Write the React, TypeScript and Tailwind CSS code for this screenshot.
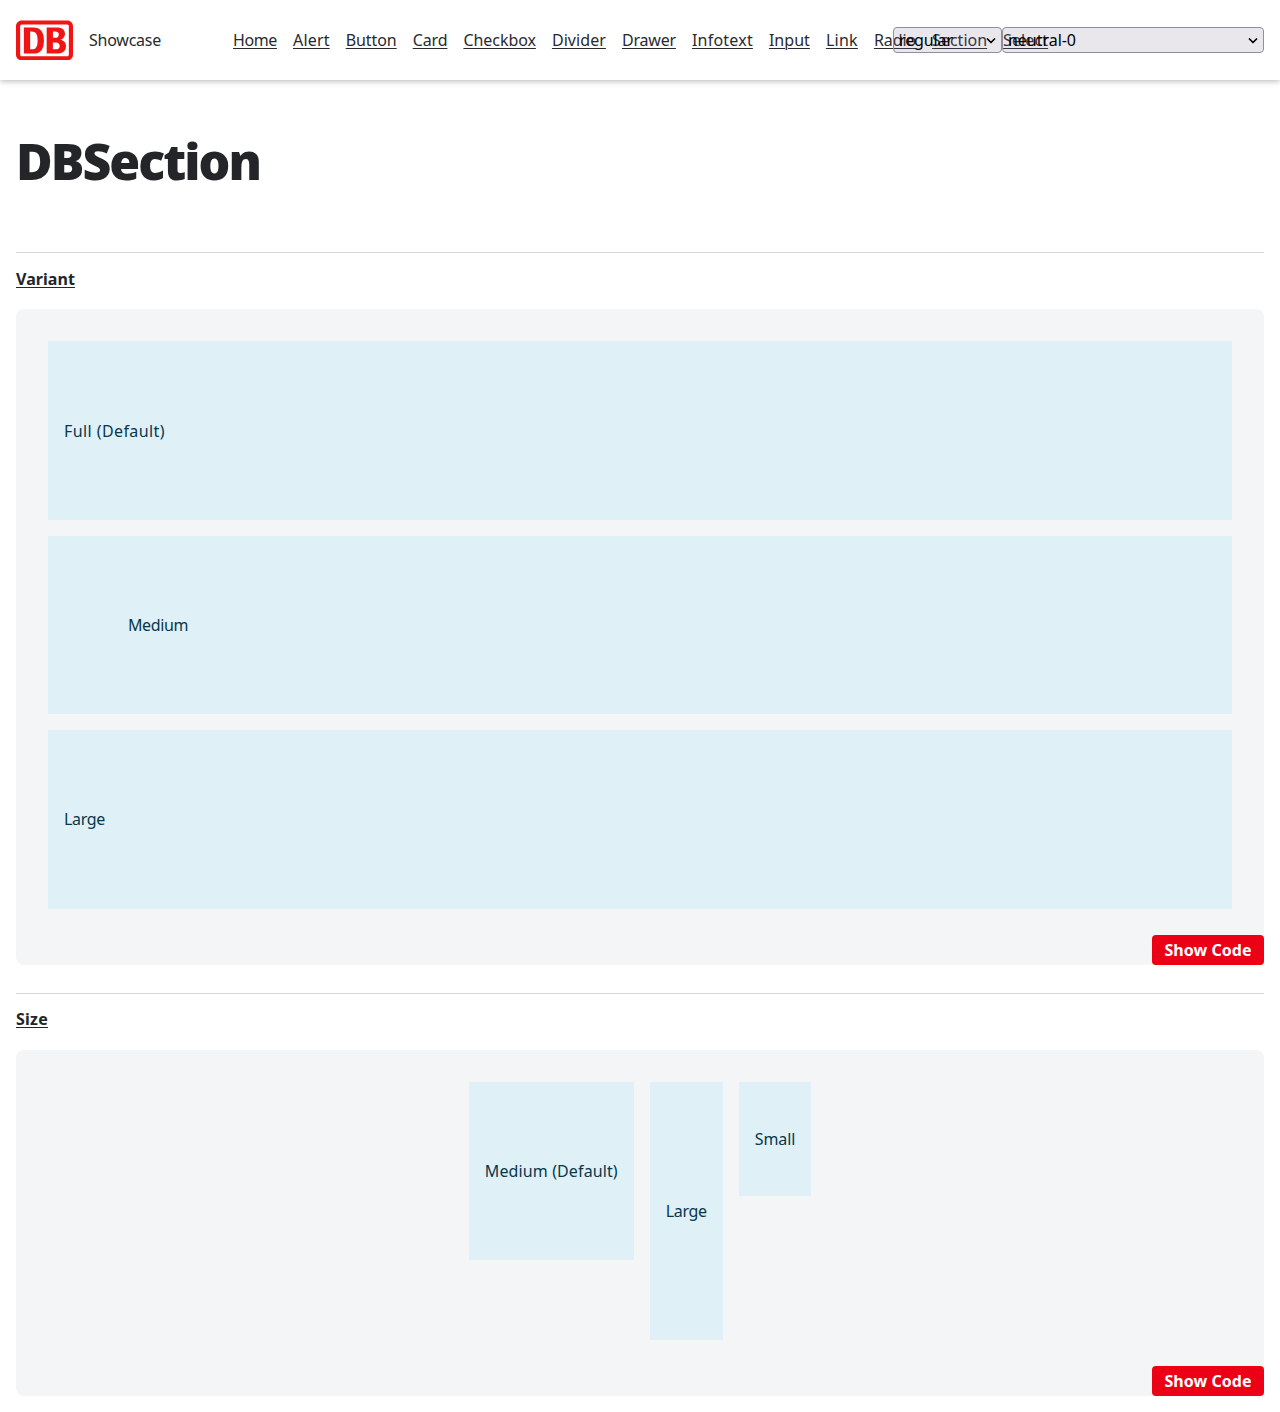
import { useLayoutEffect, useRef, useState } from "react";
import { SiDeutschebahn } from "react-icons/si";

const links: [string, number][] = [
  ["Home", 44], ["Alert", 36.7], ["Button", 51], ["Card", 34.7], ["Checkbox", 72.5],
  ["Divider", 54], ["Drawer", 54], ["Infotext", 61], ["Input", 41], ["Link", 32],
  ["Radio", 42.2], ["Section", 55], ["Select", 45],
];

/** Text tracked so that it fills the given width. */
function Fit({ text, width, className = "" }: { text: string; width: number; className?: string }) {
  const ref = useRef<HTMLSpanElement>(null);
  const [spacing, setSpacing] = useState(0);
  useLayoutEffect(() => {
    if (ref.current) {
      const natural = ref.current.getBoundingClientRect().width - spacing * text.length;
      setSpacing((width - natural) / text.length);
    }
  }, [text, width]);
  return (
    <span ref={ref} className={`inline-block whitespace-nowrap ${className}`} style={{ letterSpacing: `${spacing}px` }}>
      {text}
    </span>
  );
}

function Chevron() {
  return (
    <svg className="mt-px" width="10" height="6" viewBox="0 0 10 6" fill="none" stroke="#000" strokeWidth="1.7" strokeLinecap="round" strokeLinejoin="round">
      <path d="M1.5 1 5 4.5 8.5 1" />
    </svg>
  );
}

function Picker({ text, width, className }: { text: string; width: number; className: string }) {
  return (
    <button className={`flex h-[26px] items-center justify-between rounded border border-[#8f8f9d] bg-[#7a7391]/17 pr-[5px] pl-[5px] text-black ${className}`}>
      <Fit text={text} width={width} />
      <Chevron />
    </button>
  );
}

function Panel({ title, titleWidth, titleClass, className, children }: { title: string; titleWidth: number; titleClass: string; className: string; children: React.ReactNode }) {
  return (
    <section className="border-t border-[#d7d8da]">
      <h2 className={`flex h-14 items-center font-bold leading-6 text-[#232529] ${titleClass}`}>
        <Fit text={title} width={titleWidth} className="underline decoration-1 underline-offset-2" />
      </h2>
      <div className={`relative rounded-lg bg-[#f3f5f7] p-8 ${className}`}>
        {children}
        <button className="absolute right-0 bottom-0 flex h-[30px] w-28 items-center justify-center rounded bg-[#ec0016] font-bold text-white">
          <Fit text="Show Code" width={87} />
        </button>
      </div>
    </section>
  );
}

function Box({ text, width, className }: { text: string; width: number; className: string }) {
  return (
    <div className={`flex items-center bg-[#e0f0f7] text-[#06384c] ${className}`}>
      <Fit text={text} width={width} />
    </div>
  );
}

export default function App() {
  return (
    <div className="h-[1412px] w-[1280px] overflow-hidden bg-white font-['Noto_Sans',sans-serif] text-base leading-6 text-[#282a2f]">
      <header className="flex h-20 items-center bg-white px-4 shadow-[0_1px_6px_rgba(0,0,0,0.3)]">
        <div className="flex h-10 w-[57px] items-center justify-center overflow-hidden text-[#f01414]">
          <SiDeutschebahn size={57} className="shrink-0" />
        </div>
        <div className="ml-4 w-36">
          <Fit text="Showcase" width={72} />
        </div>
        <nav className="flex w-[660px] shrink-0 gap-4">
          {links.map(([text, width]) => (
            <a key={text} href="#">
              <Fit text={text} width={width} className="underline decoration-1 underline-offset-2" />
            </a>
          ))}
        </nav>
        <div className="relative flex shrink-0">
          <Picker text="regular" width={54} className="w-[109px]" />
          <Picker text="neutral-0" width={68} className="w-[262px]" />
        </div>
      </header>
      <main className="px-4">
        <h1 className="flex h-[172px] items-center pb-2.5 text-[50px] leading-none font-black text-[#232529]">
          <Fit text="DBSection" width={244} />
        </h1>
        <Panel title="Variant" titleWidth={59} titleClass="pb-1" className="mb-7 flex h-[656px] flex-col gap-4">
          <Box text="Full (Default)" width={101} className="h-[179px] px-4 pt-px" />
          <Box text="Medium" width={60} className="h-[178px] px-20" />
          <Box text="Large" width={41} className="h-[179px] px-4 pb-px" />
        </Panel>
        <Panel title="Size" titleWidth={32} titleClass="pb-1.5" className="flex h-[346px] items-start justify-center gap-4">
          <Box text="Medium (Default)" width={133} className="h-[178px] px-4" />
          <Box text="Large" width={41} className="h-[258px] px-4" />
          <Box text="Small" width={40.4} className="h-[114px] px-4" />
        </Panel>
      </main>
    </div>
  );
}
